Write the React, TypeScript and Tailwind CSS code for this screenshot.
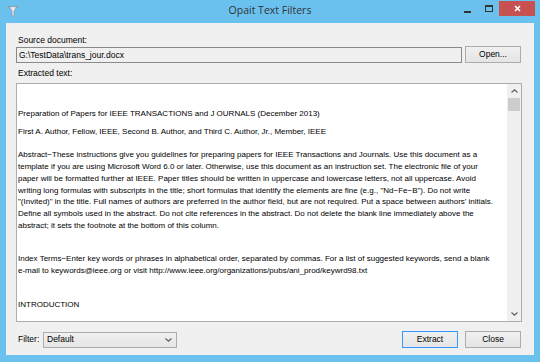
import React from 'react';

const paragraphs: { mt: string; lines: string[] }[] = [
  { mt: 'mt-[24px]', lines: ['Preparation of Papers for IEEE TRANSACTIONS and J OURNALS (December 2013)'] },
  { mt: 'mt-[6px]', lines: ['First A. Author, Fellow, IEEE, Second B. Author, and Third C. Author, Jr., Member, IEEE'] },
  {
    mt: 'mt-[12px]',
    lines: [
      'Abstract\u2212These instructions give you guidelines for preparing papers for IEEE Transactions and Journals. Use this document as a',
      'template if you are using Microsoft Word 6.0 or later. Otherwise, use this document as an instruction set. The electronic file of your',
      'paper will be formatted further at IEEE. Paper titles should be written in uppercase and lowercase letters, not all uppercase. Avoid',
      'writing long formulas with subscripts in the title; short formulas that identify the elements are fine (e.g., "Nd\u2212Fe\u2212B"). Do not write',
      '"(Invited)" in the title. Full names of authors are preferred in the author field, but are not required. Put a space between authors\u2019 initials.',
      'Define all symbols used in the abstract. Do not cite references in the abstract. Do not delete the blank line immediately above the',
      'abstract; it sets the footnote at the bottom of this column.',
    ],
  },
  {
    mt: 'mt-[22px]',
    lines: [
      'Index Terms\u2212Enter key words or phrases in alphabetical order, separated by commas. For a list of suggested keywords, send a blank',
      'e-mail to keywords@ieee.org or visit http://www.ieee.org/organizations/pubs/ani_prod/keywrd98.txt',
    ],
  },
  { mt: 'mt-[22px]', lines: ['INTRODUCTION'] },
];

function Button({ label, primary }: { label: string; primary?: boolean }) {
  return (
    <button
      className={
        'flex h-[17px] w-[56px] items-center justify-center border bg-gradient-to-b from-[#f0f0f0] to-[#e5e5e5] text-[8.5px] text-black ' +
        (primary ? 'border-[#3399ff]' : 'border-[#acacac]')
      }
    >
      {label}
    </button>
  );
}

function Chevron({ up }: { up?: boolean }) {
  return (
    <svg width="7" height="4" viewBox="0 0 7 4" className="block">
      <path d={up ? 'M0.5 3.5 L3.5 0.8 L6.5 3.5' : 'M0.5 0.5 L3.5 3.2 L6.5 0.5'} fill="none" stroke="#606060" strokeWidth="1.2" />
    </svg>
  );
}

export default function App() {
  return (
    <div className="flex h-[362px] w-[540px] flex-col bg-[#6ac1ee] font-['Liberation_Sans',Arial,sans-serif] text-[8.5px] text-black">
      <div className="relative flex h-[23px] items-start">
        <svg width="10" height="11" viewBox="0 0 10 11" className="ml-[8px] mt-[6px]">
          <defs>
            <linearGradient id="fn" x1="0" x2="1" y1="0" y2="0">
              <stop offset="0" stopColor="#8a9aa8" />
              <stop offset="0.5" stopColor="#f4f6f8" />
              <stop offset="1" stopColor="#8a9aa8" />
            </linearGradient>
          </defs>
          <path d="M0 0.5 L10 0.5 L6 5 L6 10.5 L4 9.5 L4 5 Z" fill="url(#fn)" stroke="#7d8c99" strokeWidth="0.6" />
        </svg>
        <div className="absolute left-0 right-0 top-[3px] text-center font-['Open_Sans',sans-serif] text-[10.5px] text-[#333]">
          Opait Text Filters
        </div>
        <div className="ml-auto flex items-start">
          <div className="mr-[14px] mt-[11px] h-[2px] w-[7px] bg-[#333]" />
          <div className="mr-[6px] mt-[5px] h-[7px] w-[8px] border border-t-2 border-[#333]" />
          <div className="mr-[5px] mt-[1px] flex h-[15px] w-[36px] items-center justify-center bg-[#c75050]">
            <svg width="7" height="7" viewBox="0 0 7 7">
              <path d="M1 1 L6 6 M6 1 L1 6" stroke="#fff" strokeWidth="1.6" />
            </svg>
          </div>
        </div>
      </div>

      <div className="mx-[6px] mb-[7px] flex flex-1 flex-col bg-[#f0f0f0] pl-[10px] pr-[12px] pt-[11px]">
        <div className="h-[12px] pl-[2px] leading-[12px]">Source document:</div>
        <div className="flex h-[17px] items-end gap-[3px]">
          <div className="flex h-[16px] flex-1 items-center border border-[#8a8a8a] bg-[#f0f0f0] pl-[2px]">G:\TestData\trans_jour.docx</div>
          <div className="mr-[1px]">
            <Button label="Open..." />
          </div>
        </div>
        <div className="mt-[4px] h-[12px] pl-[2px] leading-[12px]">Extracted text:</div>
        <div className="mt-[4px] flex h-[239px] border border-[#adadad] bg-white">
          <div className="flex-1 overflow-hidden pl-[1px] text-[8px] leading-[11.7px] whitespace-nowrap">
            {paragraphs.map((p, i) => (
              <div key={i} className={p.mt}>
                {p.lines.map((line, j) => (
                  <div key={j}>{line}</div>
                ))}
              </div>
            ))}
          </div>
          <div className="flex w-[14px] flex-col bg-[#f0f0f0]">
            <div className="flex h-[14px] items-center justify-center">
              <Chevron up />
            </div>
            <div className="mx-[1px] h-[13px] bg-[#cdcdcd]" />
            <div className="flex-1" />
            <div className="flex h-[14px] items-center justify-center">
              <Chevron />
            </div>
          </div>
        </div>
        <div className="mt-[9px] flex h-[17px] items-center">
          <div className="w-[27px] pl-[2px]">Filter:</div>
          <div className="flex h-[16px] w-[134px] items-center justify-between border border-[#acacac] bg-gradient-to-b from-[#f0f0f0] to-[#e5e5e5] pl-[3px] pr-[4px]">
            <span>Default</span>
            <Chevron />
          </div>
          <div className="ml-auto flex gap-[7px] pr-[1px]">
            <Button label="Extract" primary />
            <Button label="Close" />
          </div>
        </div>
      </div>
    </div>
  );
}
